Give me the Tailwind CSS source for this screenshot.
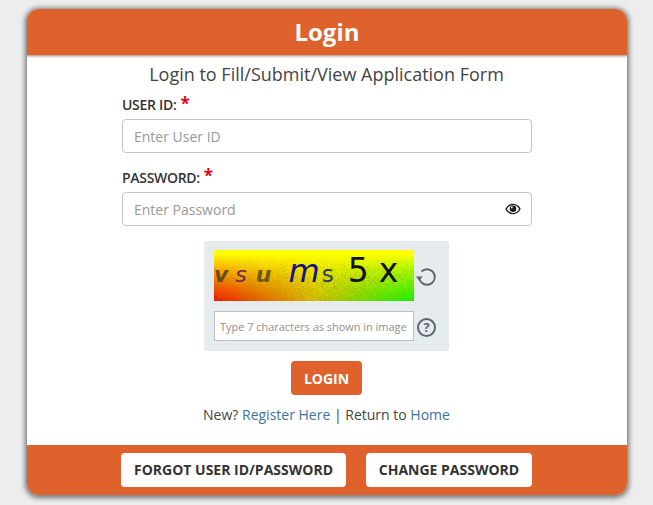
<!DOCTYPE html>
<html lang="en">
<head>
  <meta charset="UTF-8" />
  <meta name="viewport" content="width=device-width, initial-scale=1" />
  <title>Login</title>
  <script src="https://cdn.jsdelivr.net/npm/@tailwindcss/browser@4"></script>
</head>
<body class="bg-[#ededed] h-[505px] overflow-hidden font-['Open_Sans',sans-serif] text-[#333]">

  <main class="pl-[27px] pt-[9px]">
    <div class="w-[600px] h-[486px] rounded-[12px] overflow-hidden bg-white shadow-[0_1px_5px_2px_rgba(0,0,0,0.5)] flex flex-col">

      <!-- Header -->
      <header class="relative h-[47px] shrink-0 bg-[#df622d] border-b border-[#b9b0aa] shadow-[0_1px_2px_rgba(0,0,0,0.25)] flex items-center justify-center">
        <h1 class="text-white text-[24px] font-bold leading-none">Login</h1>
      </header>

      <!-- Form -->
      <section class="flex-1 flex flex-col items-center">
        <p class="mt-[6px] -ml-[1px] h-[24px] leading-[24px] text-[18px] text-[#444]">Login to Fill/Submit/View Application Form</p>

        <div class="mt-[7px] w-[410px]">
          <label class="flex items-start h-[24px] text-[14px] leading-[24px] font-semibold tracking-[-0.3px] text-[#333]">USER ID:<span class="ml-[4px] mt-[2px] text-[#e3001b] text-[17px] leading-[17px] font-bold">*</span></label>
          <div class="mt-[2px] h-[34px] rounded-[4px] border border-[#c4c4c4] px-[11px] flex items-center text-[14px] text-[#999]">Enter User ID</div>

          <label class="mt-[12px] flex items-start h-[27px] text-[14px] leading-[25px] font-semibold tracking-[-0.3px] text-[#333]">PASSWORD:<span class="ml-[4px] mt-[2px] text-[#e3001b] text-[17px] leading-[17px] font-bold">*</span></label>
          <div class="h-[34px] rounded-[4px] border border-[#c4c4c4] pl-[11px] pr-[10px] flex items-center justify-between text-[14px] text-[#999]">
            <span>Enter Password</span>
            <svg class="w-[16px] h-[12px]" viewBox="0 0 16 12">
              <path fill="#1a1a1a" fill-rule="evenodd" d="M8 .8C4.600.8 1.700 3 .3 6c1.400 3 4.300 5.200 7.700 5.200s6.300-2.200 7.700-5.200C14.300 3 11.400.8 8 .8zM8 2c-2.500 0-4.800 1.600-6.100 4C3.200 8.400 5.500 10 8 10s4.800-1.600 6.100-4C12.800 3.600 10.500 2 8 2z" />
              <circle cx="8" cy="5.800" r="3.300" fill="#1a1a1a" />
              <circle cx="6.800" cy="4.500" r=".9" fill="#fff" />
            </svg>
          </div>
        </div>

        <!-- Captcha -->
        <div class="mt-[15px] -ml-[1px] w-[245px] h-[110px] rounded-[3px] bg-[#e6ebee] pl-[10px] pt-[9px]">
          <div class="flex items-center">
            <div class="relative w-[200px] h-[51px] overflow-hidden bg-[linear-gradient(to_bottom,#ffff00_8%,rgba(255,255,0,0)_100%),linear-gradient(to_right,#ff0000,#d8c000_50%,#00ff00)]">
              <svg class="absolute inset-0 w-full h-full opacity-60 [mask-image:linear-gradient(to_bottom,transparent_10%,black_55%)]" xmlns="http://www.w3.org/2000/svg">
                <filter id="noise"><feTurbulence type="fractalNoise" baseFrequency="1.300" numOctaves="2" seed="4" /><feColorMatrix values="0 0 0 0 0.350  0 0 0 0 0.300  0 0 0 0 0  3 0 0 0 -1.300" /></filter>
                <rect width="200" height="51" filter="url(#noise)" />
              </svg>
              <div class="relative h-full pt-[4px] flex items-baseline whitespace-nowrap font-['DejaVu_Sans',sans-serif] leading-none">
                <span class="text-[22px] font-bold italic text-[#6a4a18]">v</span>
                <span class="ml-[7px] text-[22px] italic text-[#6a2a5a]">s</span>
                <span class="ml-[9px] text-[22px] font-bold italic text-[#6a5a14]">u</span>
                <span class="ml-[17px] text-[32px] italic text-[#14148a]">m</span>
                <span class="ml-[2px] text-[23px] text-[#2a3a6a]">s</span>
                <span class="ml-[14px] text-[33px] text-[#111]">5</span>
                <span class="ml-[10px] text-[33px] text-[#111]">x</span>
              </div>
            </div>
            <svg class="ml-[2px] mt-[2px] w-[22px] h-[22px]" viewBox="0 0 22 22" fill="none">
              <path d="M5.500 5.500C7 4 8.900 3.200 11 3.200c4.300 0 7.800 3.500 7.800 7.800s-3.500 7.800-7.800 7.800-7.800-3.500-7.800-7.800" stroke="#5b6770" stroke-width="1.900" />
              <path d="M0 10.500h6.600L3.200 15z" fill="#5b6770" />
            </svg>
          </div>
          <div class="mt-[10px] flex items-center">
            <div class="w-[200px] h-[30px] bg-white border border-[#b9c0cc] pl-[5px] pt-[3px] flex items-center text-[11px] tracking-[-0.03px] text-[#8f8f8f] whitespace-nowrap overflow-hidden">Type 7 characters as shown in image</div>
            <div class="ml-[3px] mt-[2px] w-[19px] h-[19px] rounded-full border-2 border-[#5b6770] flex items-center justify-center text-[13px] font-bold leading-none text-[#5b6770]">?</div>
          </div>
        </div>

        <button class="mt-[10px] -ml-[1px] w-[71px] h-[34px] rounded-[4px] bg-[#df622d] text-white text-[14px] font-bold">LOGIN</button>

        <p class="mt-[10px] -ml-[1px] h-[20px] leading-[20px] text-[14px] text-[#444]">New? <a class="text-[#3e72a5]">Register Here</a> | Return to <a class="text-[#3e72a5]">Home</a></p>
      </section>

      <!-- Footer -->
      <footer class="h-[50px] shrink-0 bg-[#df622d] flex items-center justify-center gap-[20px] pb-[1px] pr-[1px]">
        <button class="w-[225px] h-[34px] rounded-[4px] bg-white text-[14px] font-bold text-[#333]">FORGOT USER ID/PASSWORD</button>
        <button class="w-[166px] h-[34px] rounded-[4px] bg-white text-[14px] font-bold text-[#333]">CHANGE PASSWORD</button>
      </footer>
    </div>
  </main>
</body>
</html>
